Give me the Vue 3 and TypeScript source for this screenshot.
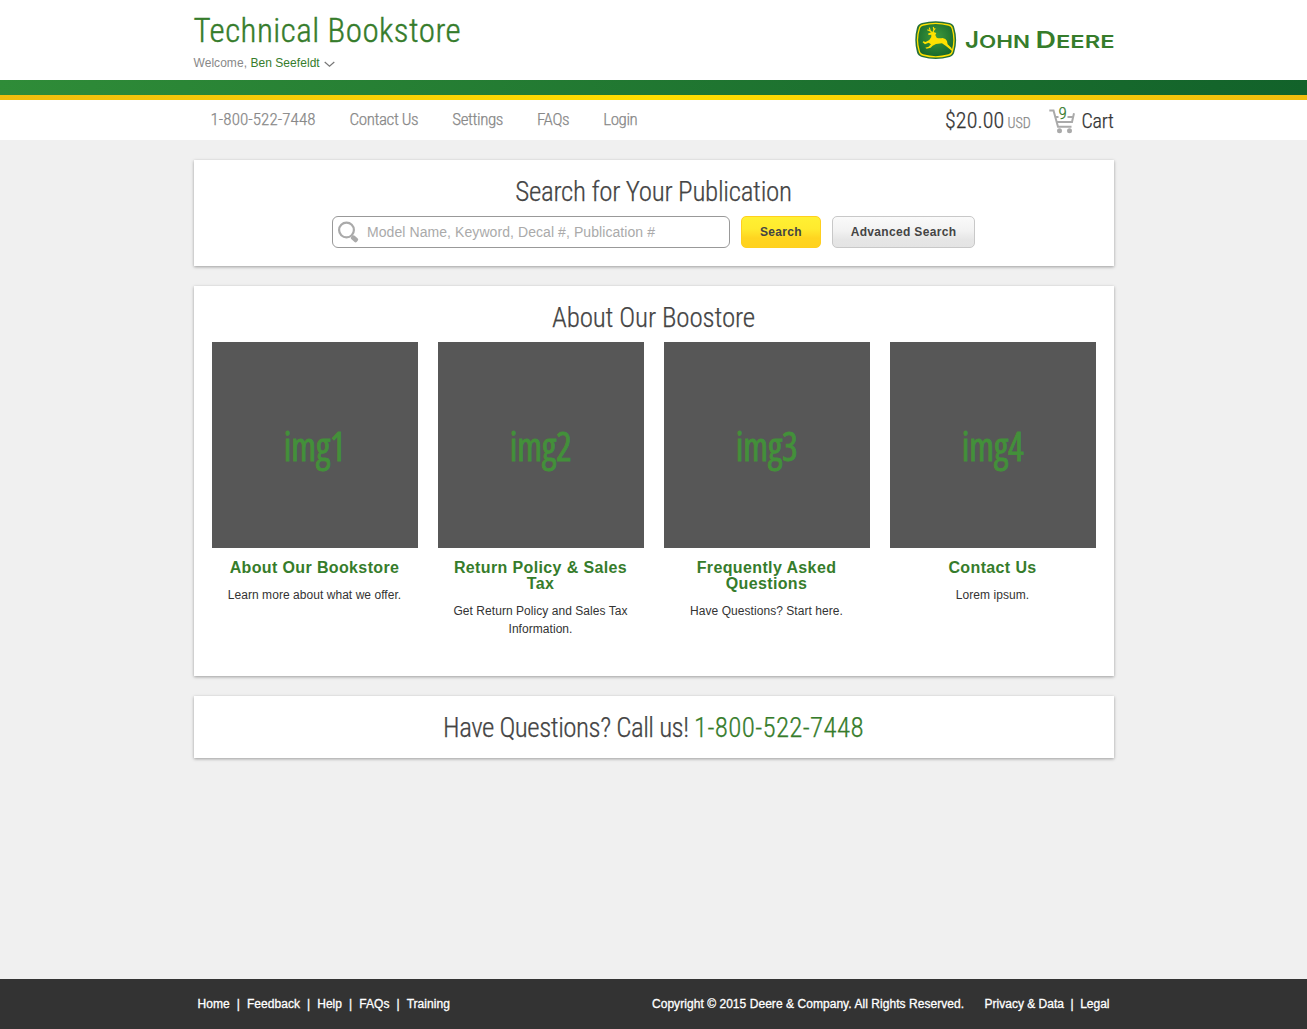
<script setup lang="ts">
interface Tile {
  label: string
  title: string
  text: string
}

const nav = ['1-800-522-7448', 'Contact Us', 'Settings', 'FAQs', 'Login']
const tiles: Tile[] = [
  { label: 'img1', title: 'About Our Bookstore', text: 'Learn more about what we offer.' },
  { label: 'img2', title: 'Return Policy & Sales Tax', text: 'Get Return Policy and Sales Tax Information.' },
  { label: 'img3', title: 'Frequently Asked Questions', text: 'Have Questions? Start here.' },
  { label: 'img4', title: 'Contact Us', text: 'Lorem ipsum.' },
]
const footerLinks = ['Home', 'Feedback', 'Help', 'FAQs', 'Training']
const legalLinks = ['Privacy & Data', 'Legal']
</script>

<template>
  <div class="page">
    <header class="header">
      <div class="wrap header-row">
        <div>
          <h1>Technical Bookstore</h1>
          <p class="welcome">
            Welcome, <a>Ben Seefeldt</a>
            <svg width="11" height="7" viewBox="0 0 11 7"><path d="M.7 1l4.8 4.2L10.300 1" fill="none" stroke="#777" stroke-width="1.200" /></svg>
          </p>
        </div>
        <svg class="logo" width="200" height="40" viewBox="0 0 200 40">
          <defs>
            <radialGradient id="shield" cx="50%" cy="40%" r="65%">
              <stop offset="0" stop-color="#3f9a3c" />
              <stop offset="1" stop-color="#14652b" />
            </radialGradient>
          </defs>
          <g transform="translate(1.300 1) scale(.3333)">
            <path d="M20 6Q61 -5 103 6Q115 9 117 20Q128 57 117 94Q114 105 103 108Q61 120 20 108Q8 105 5 94Q-5 57 5 20Q8 9 20 6Z" fill="#26713a" />
            <path d="M23 12Q61 2 100 12Q109 14 111 23Q121 57 111 91Q109 100 100 102Q61 113 23 102Q14 100 12 91Q1 57 12 23Q14 14 23 12Z" fill="url(#shield)" stroke="#ffe100" stroke-width="4" />
            <path d="M38 38L47 34L55 33L63 36L60 42L64 50Q70 53 82 51Q92 52 95 60L97 70L108 80L113 92L103 84L91 74L80 67L62 69L52 74L46 80L34 83L30 80L40 77L47 70L40 65L29 70L22 64L24 61L31 63L42 57L48 48L48 41L40 42Z" fill="#ffe100" />
            <path d="M51 35L45 30L36 26M45 30L42 20M53 34L56 27L54 18M56 27L60 22" fill="none" stroke="#ffe100" stroke-width="3.500" />
          </g>
          <g class="wordmark">
            <text x="51" y="28.300" font-size="23" textLength="14" lengthAdjust="spacingAndGlyphs">J</text>
            <text x="65" y="28.300" font-size="17.500" textLength="51" lengthAdjust="spacingAndGlyphs">OHN</text>
            <text x="121.500" y="28.300" font-size="22.500" textLength="20.500" lengthAdjust="spacingAndGlyphs">D</text>
            <text x="142" y="28.300" font-size="17.500" textLength="58.500" lengthAdjust="spacingAndGlyphs">EERE</text>
          </g>
        </svg>
      </div>
    </header>
    <div class="green-bar"></div>
    <div class="yellow-bar"></div>
    <nav class="nav">
      <div class="wrap nav-row">
        <div class="menu"><a v-for="n in nav" :key="n">{{ n }}</a></div>
        <div class="total"><b>$20.00</b><small>USD</small></div>
        <div class="cart">
          <div class="cart-icon">
            <svg width="26" height="25" viewBox="0 0 26 25">
              <path d="M.3 1.400H4.500L9 17.800H22.500M6 8H9.500M18.500 8H23.500M7.500 13H23L25 4.200" fill="none" stroke="#aaa" stroke-width="2" />
              <circle cx="10.500" cy="21.800" r="2.500" fill="#aaa" />
              <circle cx="20.500" cy="21.800" r="2.500" fill="#aaa" />
            </svg>
            <em>9</em>
          </div>
          <span>Cart</span>
        </div>
      </div>
    </nav>

    <main class="wrap main">
      <section class="card search">
        <h2>Search for Your Publication</h2>
        <div class="search-row">
          <div class="ph">
            <svg width="22" height="22" viewBox="0 0 22 22">
              <circle cx="9.500" cy="9" r="7.400" fill="none" stroke="#aaa" stroke-width="2.200" />
              <rect x="13.800" y="15.400" width="7.400" height="4.800" rx="1.800" transform="rotate(42 17.500 17.800)" fill="#aaa" />
            </svg>
            <span>Model Name, Keyword, Decal #, Publication #</span>
          </div>
          <button class="btn yellow">Search</button>
          <button class="btn gray">Advanced Search</button>
        </div>
      </section>

      <section class="card about">
        <h2>About Our Boostore</h2>
        <div class="tiles">
          <article v-for="t in tiles" :key="t.label" class="tile">
            <div class="thumb"><span>{{ t.label }}</span></div>
            <h3>{{ t.title }}</h3>
            <p>{{ t.text }}</p>
          </article>
        </div>
      </section>

      <section class="card call">
        <h2>Have Questions? Call us! <a>1-800-522-7448</a></h2>
      </section>
    </main>

    <footer class="footer">
      <div class="wrap footer-row">
        <div class="links">
          <template v-for="(l, i) in footerLinks" :key="l"><i v-if="i">|</i><a>{{ l }}</a></template>
        </div>
        <div class="links legal">
          <p>Copyright © 2015 Deere &amp; Company. All Rights Reserved.</p>
          <template v-for="(l, i) in legalLinks" :key="l"><i v-if="i">|</i><a>{{ l }}</a></template>
        </div>
      </div>
    </footer>
  </div>
</template>

<style>
body {
  background: #f0f0f0;
}
</style>

<style scoped>
.page {
  display: flex;
  flex-direction: column;
  height: 1029px;
  overflow: hidden;
  font-family: "Liberation Sans", Arial, sans-serif;
  font-size: 12px;
  color: #333;
  background: #f0f0f0;
}
h1, h2, h3, p {
  margin: 0;
}
h1, h2, .menu, .total, .cart {
  font-family: "Roboto Condensed", Roboto, sans-serif;
  font-stretch: 75%;
  font-weight: 300;
  white-space: nowrap;
  -webkit-text-stroke: 0.25px currentColor;
}
.wrap {
  width: 920px;
  margin: 0 auto;
}
.header {
  height: 80px;
  background: #fff;
}
.header-row {
  display: flex;
  justify-content: space-between;
}
h1 {
  height: 54px;
  line-height: 61px;
  font-size: 33px;
  letter-spacing: 0.47px;
  color: #367c2b;
  -webkit-text-stroke-width: 0.4px;
}
.welcome {
  line-height: 18px;
  letter-spacing: 0.05px;
  color: #888;
}
.welcome a {
  color: #367c2b;
}
.welcome svg {
  margin-left: 4px;
  vertical-align: -1px;
}
.logo {
  margin-top: 20px;
}
.wordmark {
  font-family: Inter, sans-serif;
  font-weight: 600;
  fill: #367c2b;
}
.green-bar {
  flex: none;
  height: 15px;
  background: linear-gradient(100deg, #2f8c38, #12622a);
}
.yellow-bar {
  flex: none;
  height: 5px;
  background: linear-gradient(90deg, #f0bd0e, #ffde00 50%, #f0bd0e);
}
.nav {
  height: 40px;
  background: #fff;
}
.nav-row {
  display: flex;
  height: 40px;
}
.menu {
  display: flex;
  flex: 1;
  font-size: 17px;
  letter-spacing: -0.42px;
  line-height: 39px;
  color: #888;
}
.menu a {
  padding: 0 17px;
}
.menu a:first-child {
  letter-spacing: 0.07px;
}
.total {
  line-height: 41px;
  margin-right: 18px;
  color: #333;
}
.total b {
  font-weight: 300;
  font-size: 22px;
  letter-spacing: 0.1px;
}
.total small {
  margin-left: 3px;
  font-size: 14px;
  color: #888;
}
.cart {
  display: flex;
  font-size: 20px;
  letter-spacing: -0.3px;
  line-height: 42px;
  color: #333;
}
.cart-icon {
  position: relative;
  width: 26px;
  margin-right: 7px;
}
.cart-icon svg {
  display: block;
  margin-top: 9px;
}
.cart-icon em {
  position: absolute;
  left: 10px;
  top: 3px;
  font-style: normal;
  font-size: 17px;
  line-height: 20px;
  color: #367c2b;
}
.main {
  display: flex;
  flex-direction: column;
  gap: 20px;
  padding-top: 20px;
  flex: 1;
}
.card {
  background: #fff;
  box-shadow: 0 1px 3px rgba(0, 0, 0, 0.35);
  text-align: center;
}
h2 {
  font-size: 27px;
  line-height: 38px;
  color: #444;
}
.search {
  height: 93px;
  padding-top: 13px;
}
.search h2 {
  letter-spacing: -0.3px;
}
.search-row {
  display: flex;
  justify-content: center;
  gap: 11px;
  margin-top: 5px;
}
.ph {
  display: flex;
  align-items: center;
  box-sizing: border-box;
  width: 398px;
  height: 32px;
  padding-left: 4px;
  border: 1px solid #999;
  border-radius: 6px;
  font-size: 14px;
  letter-spacing: 0.075px;
  color: #aaa;
}
.ph span {
  margin-left: 8px;
}
.btn {
  height: 32px;
  padding: 0;
  border-radius: 5px;
  font: bold 12px "Liberation Sans", Arial, sans-serif;
  letter-spacing: 0.33px;
  color: #444;
}
.yellow {
  width: 80px;
  border: 1px solid #ffcf1f;
  background: linear-gradient(#fff033, #ffea2e 40%, #ffd520 70%, #ffd21e);
}
.gray {
  width: 143px;
  border: 1px solid #c8c8c8;
  background: linear-gradient(#fafafa, #f2f2f2 45%, #e6e6e6 75%, #e4e4e4);
}
.about {
  height: 377px;
  padding-top: 13px;
}
.about h2 {
  letter-spacing: -0.13px;
}
.tiles {
  display: flex;
  justify-content: center;
  gap: 20px;
  margin-top: 5px;
}
.tile {
  width: 206px;
}
.thumb {
  display: flex;
  align-items: center;
  justify-content: center;
  height: 206px;
  background: #575757;
}
.thumb span {
  font: 500 40px "Open Sans", sans-serif;
  font-stretch: 75%;
  letter-spacing: -0.1px;
  color: #43903a;
  -webkit-text-stroke: 0.9px #43903a;
  transform: scaleX(0.92);
}
h3 {
  padding: 12px 10px 0;
  font-size: 16px;
  line-height: 16px;
  letter-spacing: 0.37px;
  color: #367c2b;
}
.tile p {
  padding: 10px 10px 0;
  line-height: 18px;
  letter-spacing: 0.05px;
}
.call {
  height: 49px;
  padding-top: 13px;
}
.call h2 {
  letter-spacing: -0.5px;
}
.call a {
  letter-spacing: 0.32px;
  color: #367c2b;
}
.footer {
  flex: none;
  height: 50px;
  background: #333;
}
.footer-row {
  display: flex;
  justify-content: space-between;
  box-sizing: border-box;
  padding: 0 4px;
  line-height: 50px;
  letter-spacing: 0.05px;
  color: #fff;
  -webkit-text-stroke: 0.3px #fff;
}
.links {
  display: flex;
}
.links i {
  margin: 0 7px;
  font-style: normal;
}
.links p {
  margin-right: 20.5px;
}
.legal a {
  letter-spacing: 0;
}
.legal i {
  margin: 0 6.5px;
}
</style>
